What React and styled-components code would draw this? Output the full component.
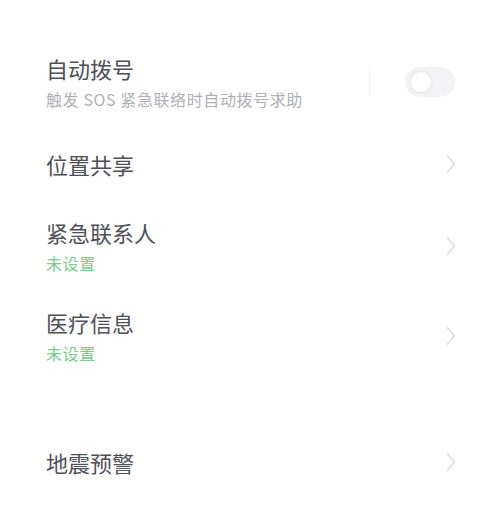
import styled, { createGlobalStyle } from 'styled-components';

const Global = createGlobalStyle`
  body {
    margin: 0;
    background: #ffffff;
    font-family: "Noto Sans CJK SC", "Noto Sans", sans-serif;
  }
`;

const Page = styled.div`
  width: 500px;
  height: 522px;
  padding: 37px 45px 0 46px;
  box-sizing: border-box;
  display: flex;
  flex-direction: column;
`;

const Row = styled.div`
  display: flex;
  align-items: center;
  height: ${p => (p.sub ? 90 : 74)}px;
  margin-top: ${p => p.gap || 0}px;
`;

const Texts = styled.div`
  flex: 1;
  display: flex;
  flex-direction: column;
`;

const Title = styled.div`
  font-size: 22px;
  line-height: 30px;
  color: #4f4f57;
`;

const Sub = styled.div`
  margin-top: 4px;
  font-size: 16px;
  line-height: 24px;
  letter-spacing: 0.6px;
  color: ${p => (p.green ? '#79cc8c' : '#b0b0b4')};
`;

const Divider = styled.div`
  width: 1px;
  height: 30px;
  background: #f0f0f2;
  margin-right: 35px;
`;

const Toggle = styled.div`
  width: 50px;
  height: 30px;
  border-radius: 15px;
  background: #f3f3f5;
  display: flex;
  align-items: center;
  padding-left: 4px;
  box-sizing: border-box;
`;

const Knob = styled.div`
  width: 20px;
  height: 20px;
  border-radius: 50%;
  background: #fff;
  border: 2px solid #ececef;
`;

const Chevron = () => (
  <svg width="12" height="22" viewBox="0 0 12 22" style={{ marginRight: -2 }}>
    <path d="M2.5 3 L9.5 11 L2.5 19" fill="none" stroke="#dedee1" strokeWidth="1.7" strokeLinecap="round" strokeLinejoin="round" />
  </svg>
);

const App = () => (
  <>
    <Global />
    <Page>
      <Row sub>
        <Texts>
          <Title>自动拨号</Title>
          <Sub>触发 SOS 紧急联络时自动拨号求助</Sub>
        </Texts>
        <Divider />
        <Toggle><Knob /></Toggle>
      </Row>
      <Row>
        <Texts><Title>位置共享</Title></Texts>
        <Chevron />
      </Row>
      <Row sub>
        <Texts>
          <Title>紧急联系人</Title>
          <Sub green>未设置</Sub>
        </Texts>
        <Chevron />
      </Row>
      <Row sub>
        <Texts>
          <Title>医疗信息</Title>
          <Sub green>未设置</Sub>
        </Texts>
        <Chevron />
      </Row>
      <Row gap={44}>
        <Texts><Title>地震预警</Title></Texts>
        <Chevron />
      </Row>
    </Page>
  </>
);

export default App;
